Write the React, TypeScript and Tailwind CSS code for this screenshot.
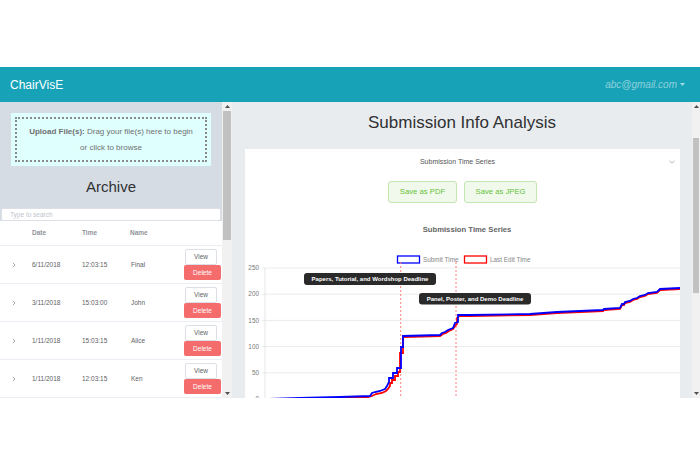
import React from 'react';

type Row = { date: string; time: string; name: string };

const rows: Row[] = [
  { date: '6/11/2018', time: '12:03:15', name: 'Final' },
  { date: '3/11/2018', time: '15:03:00', name: 'John' },
  { date: '1/11/2018', time: '15:03:15', name: 'Alice' },
  { date: '1/11/2018', time: '12:03:15', name: 'Ken' },
];

// pixel points of the two step lines (page coordinates, the svg viewBox uses them directly)
const blue: [number, number][] = [
  [265, 399], [300, 398], [340, 397], [370, 396], [372, 393], [375, 392], [380, 391], [385, 389],
  [387, 386], [389, 382], [389, 378], [393, 378], [393, 373], [397, 373], [397, 368], [401, 368],
  [401, 347], [403, 347], [403, 336], [440, 335], [442, 333], [445, 332], [448, 330], [453, 328],
  [455, 323], [458, 322], [458, 315], [470, 315], [530, 314], [557, 312], [603, 310], [604, 309],
  [620, 308], [621, 306], [622, 304], [624, 304], [625, 302], [630, 301], [633, 299], [637, 298],
  [640, 296], [645, 295], [648, 293], [657, 292], [659, 290], [660, 289], [680, 288],
];

const red: [number, number][] = [
  [265, 399], [300, 399], [340, 398], [368, 397], [372, 396], [376, 394], [382, 393], [386, 391],
  [388, 389], [390, 386], [390, 383], [392, 383], [392, 380], [395, 380], [395, 376], [398, 376],
  [398, 372], [400, 372], [400, 353], [403, 353], [403, 337], [440, 336], [443, 334], [446, 333],
  [449, 331], [453, 329], [455, 326], [457, 324], [457, 318], [459, 316], [470, 316], [530, 315],
  [557, 313], [603, 311], [604, 310], [620, 309], [621, 307], [622, 305], [624, 305], [625, 303],
  [630, 302], [633, 300], [637, 299], [640, 297], [645, 296], [648, 294], [657, 293], [659, 291],
  [660, 290], [680, 289],
];

const toPath = (pts: [number, number][]) =>
  pts.map(([x, y], i) => `${i === 0 ? 'M' : 'L'}${x} ${y}`).join(' ');

const ticks = [
  { v: '250', y: 268 },
  { v: '200', y: 294.2 },
  { v: '150', y: 320.4 },
  { v: '100', y: 346.6 },
  { v: '50', y: 372.8 },
  { v: '0', y: 399 },
];

const Arrow = ({ up }: { up?: boolean }) => (
  <div className="h-[9px] flex items-center justify-center">
    <svg width="5" height="3" viewBox="0 0 5 3">
      <polygon points={up ? '2.5 0, 5 3, 0 3' : '0 0, 5 0, 2.5 3'} fill="#505050" />
    </svg>
  </div>
);

const Scrollbar = ({ w, gap, thumb }: { w: string; gap: string; thumb: string }) => (
  <div className={`${w} bg-[#f1f1f1] flex flex-col shrink-0`}>
    <Arrow up />
    <div className={gap} />
    <div className={`${thumb} mx-[1px] bg-[#c1c1c1]`} />
    <div className="flex-1" />
    <Arrow />
  </div>
);

const Chevron = () => (
  <svg width="4" height="6" viewBox="0 0 4 6">
    <path d="M0.8 0.8 L3 3 L0.8 5.2" stroke="#909399" strokeWidth="0.8" fill="none" />
  </svg>
);

const Archive = () => (
  <aside className="w-[222px] bg-[#d6dce4] flex flex-col overflow-hidden shrink-0">
    <div className="mx-[11px] mt-[11px] bg-[#dfffff] p-[4px]">
      <div className="border-2 border-dotted border-[#8a8a8a] h-[45px] flex items-center justify-center text-center text-[8px] leading-[16px] text-[#707070]">
        <p>
          <span className="font-bold">Upload File(s):</span> Drag your file(s) here to begin
          <br />
          or click to browse
        </p>
      </div>
    </div>
    <h2 className="mt-[12px] text-center text-[15px] leading-[18px] text-[#303133]">Archive</h2>
    <div className="mt-[12px] ml-[1px] w-[220px] h-[15px] bg-white border border-[#dcdfe6] rounded-[2px] flex items-center pl-[8px] text-[6.5px] text-[#c0c4cc]">
      Type to search
    </div>
    <div className="flex-1 bg-white text-[6.5px]">
      <div className="h-[25px] flex items-center border-b border-[#ebeef5] font-bold text-[#909399]">
        <div className="w-[32px]" />
        <div className="w-[50px]">Date</div>
        <div className="w-[48px]">Time</div>
        <div className="w-[54px]">Name</div>
      </div>
      {rows.map((r, i) => (
        <div key={i} className="h-[38px] flex items-center border-b border-[#ebeef5] text-[#606266]">
          <div className="w-[32px] flex justify-center pr-[5px]">
            <Chevron />
          </div>
          <div className="w-[50px]">{r.date}</div>
          <div className="w-[48px]">{r.time}</div>
          <div className="w-[54px] pl-[1px]">{r.name}</div>
          <div className="flex flex-col items-start">
            <button className="w-[32px] h-[16px] ml-[1px] bg-white border border-[#dcdfe6] rounded-[2px] text-[#606266]">
              View
            </button>
            <button className="w-[37px] h-[15px] bg-[#f56c6c] rounded-[2px] text-white">Delete</button>
          </div>
        </div>
      ))}
    </div>
  </aside>
);

const Chart = () => (
  <svg
    width="435"
    height="195"
    viewBox="245 215 435 195"
    className="mt-[12px] block"
    fontFamily="'Liberation Sans', Arial, sans-serif"
  >
    <text x="467" y="232" textAnchor="middle" fontSize="7.7" fontWeight="bold" fill="#666">
      Submission Time Series
    </text>

    {/* legend */}
    <rect x="397.5" y="256" width="22" height="7" fill="#fff" stroke="#0000ff" strokeWidth="1.3" />
    <text x="423" y="262" fontSize="6.4" fill="#888">Submit Time</text>
    <rect x="464.5" y="256" width="22" height="7" fill="#fff" stroke="#ff0000" strokeWidth="1.3" />
    <text x="490" y="262" fontSize="6.4" fill="#888">Last Edit Time</text>

    {/* grid */}
    {ticks.map((t) => (
      <g key={t.v}>
        <line x1="262" x2="680" y1={t.y} y2={t.y} stroke="#e6e6e6" strokeWidth="0.8" />
        <text x="259" y={t.y + 2.2} textAnchor="end" fontSize="6.4" fill="#777">
          {t.v}
        </text>
      </g>
    ))}
    <line x1="265" x2="265" y1="268" y2="402" stroke="#e0e0e0" strokeWidth="0.8" />

    {/* deadlines */}
    <line x1="400.7" x2="400.7" y1="262" y2="400" stroke="#ff7070" strokeWidth="0.9" strokeDasharray="2 2" />
    <line x1="456" x2="456" y1="262" y2="400" stroke="#ff7070" strokeWidth="0.9" strokeDasharray="2 2" />

    <path d={toPath(red)} stroke="#ff0000" strokeWidth="1.8" fill="none" />
    <path d={toPath(blue)} stroke="#0000ff" strokeWidth="1.8" fill="none" />

    <rect x="304" y="273" width="132" height="12" rx="3" fill="#2a2a2a" />
    <text x="370" y="281.3" textAnchor="middle" fontSize="6" fontWeight="bold" fill="#fff">
      Papers, Tutorial, and Wordshop Deadline
    </text>
    <rect x="419" y="293" width="112" height="11.5" rx="3" fill="#2a2a2a" />
    <text x="475" y="301" textAnchor="middle" fontSize="6" fontWeight="bold" fill="#fff">
      Panel, Poster, and Demo Deadline
    </text>
  </svg>
);

const Analysis = () => (
  <main className="w-[460px] bg-[#e9ecef] flex flex-col overflow-hidden shrink-0">
    <h1 className="pt-[11px] text-center text-[17px] leading-[20px] text-[#303133]">Submission Info Analysis</h1>
    <section className="mt-[16px] ml-[13px] w-[435px] flex-1 bg-white flex flex-col">
      <div className="h-[26px] relative flex items-center justify-center pr-[10px] text-[7px] text-[#555]">
        Submission Time Series
        <svg className="absolute right-[5px] top-[11px]" width="6" height="4" viewBox="0 0 6 4">
          <path d="M0.5 0.8 L3 3.2 L5.5 0.8" stroke="#a0a0a0" strokeWidth="0.8" fill="none" />
        </svg>
      </div>
      <div className="mt-[6px] flex justify-center gap-[7px] text-[7.7px] text-[#67c23a]">
        <button className="w-[69px] h-[22px] bg-[#f0f9eb] border border-[#c2e7b0] rounded-[3px]">Save as PDF</button>
        <button className="w-[73px] h-[22px] bg-[#f0f9eb] border border-[#c2e7b0] rounded-[3px]">Save as JPEG</button>
      </div>
      <Chart />
    </section>
  </main>
);

export default function App() {
  return (
    <div className="w-[700px] h-[467px] bg-white flex flex-col font-['Liberation_Sans',Arial,sans-serif]">
      <div className="h-[67px] shrink-0" />
      <nav className="h-[35px] shrink-0 bg-[#17a2b8] flex items-center justify-between pl-[10px] pr-[15px]">
        <span className="text-white text-[12px]">ChairVisE</span>
        <span className="flex items-center gap-[3px] italic text-[10px] text-white/50">
          abc@gmail.com
          <svg width="5" height="3" viewBox="0 0 5 3">
            <polygon points="0 0, 5 0, 2.5 3" fill="rgba(255,255,255,0.6)" />
          </svg>
        </span>
      </nav>
      <div className="h-[296px] shrink-0 flex overflow-hidden">
        <Archive />
        <Scrollbar w="w-[10px]" gap="h-0" thumb="h-[129px]" />
        <Analysis />
        <Scrollbar w="w-[8px]" gap="h-[27px]" thumb="h-[155px]" />
      </div>
      <div className="flex-1" />
    </div>
  );
}
